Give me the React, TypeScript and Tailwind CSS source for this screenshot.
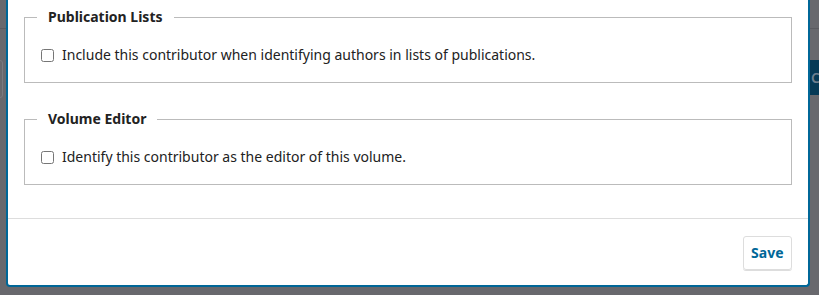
const font = { fontFamily: '"Noto Sans", "Open Sans", sans-serif' };

interface OptionProps {
    legend: string;
    label: string;
}

const OptionFieldset = ({ legend, label }: OptionProps) => {
    return (
        <fieldset className="border border-[#bbbbbb] px-4 pt-[18px] pb-[17px]">
            <legend className="-ml-[4px] px-[11px] text-sm font-bold leading-5 text-[#222222]">{legend}</legend>
            <label className="flex items-center gap-2 text-sm leading-5 text-[#222222]">
                <input type="checkbox" className="m-0 h-[13px] w-[13px] shrink-0" />
                <span>{label}</span>
            </label>
        </fieldset>
    );
};

export default function App() {
    return (
        <div className="relative h-[295px] w-[819px] overflow-hidden bg-[#68686d]" style={font}>
            {/* page behind the overlay */}
            <div className="absolute left-0 top-[28px] h-px w-[6px] bg-[#5b5b60]" />
            <div className="absolute left-[-4px] top-[60px] h-[38px] w-[7px] rounded-[3px] border border-[#7a7a7f]" />
            <div className="absolute left-[810px] top-[28px] h-px w-[9px] bg-[#5b5b60]" />
            <div className="absolute left-[810px] top-[60px] flex h-[35px] w-[12px] items-center overflow-hidden bg-[#063a56] pl-[1px] text-sm font-semibold text-[#6f8090]">
                Co
            </div>

            {/* modal */}
            <div className="relative ml-[6px] flex h-[287px] w-[804px] flex-col rounded-b-[4px] border-x-2 border-b-2 border-[#006798] bg-white">
                <div className="flex flex-1 flex-col gap-[26px] px-4 pt-[7px]">
                    <OptionFieldset
                        legend="Publication Lists"
                        label="Include this contributor when identifying authors in lists of publications."
                    />
                    <OptionFieldset
                        legend="Volume Editor"
                        label="Identify this contributor as the editor of this volume."
                    />
                </div>
                <div className="flex justify-end border-t border-[#dddddd] px-4 pt-[17px] pb-[15px]">
                    <button className="h-[34px] rounded-[3px] border border-[#dddddd] px-[7.5px] text-sm font-bold text-[#006798] shadow-[0_1px_0_#dddddd]">
                        Save
                    </button>
                </div>
            </div>
        </div>
    );
}
